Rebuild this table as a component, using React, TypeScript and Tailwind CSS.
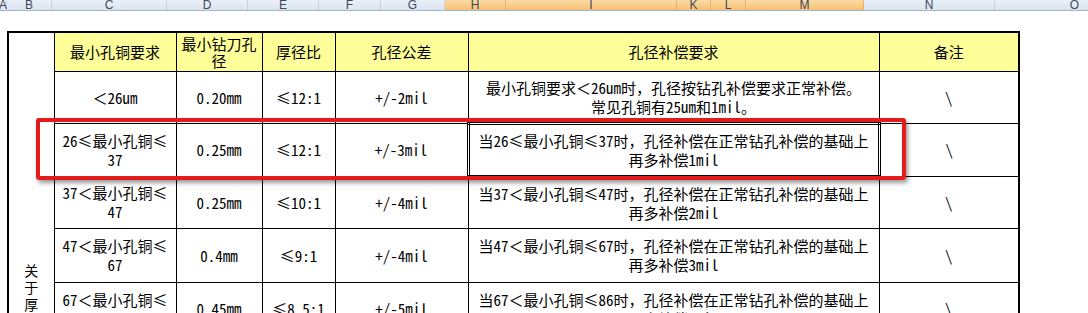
import React from "react";

const colHeads = [
  { l: "A", w: "w-[7px]", sel: false },
  { l: "B", w: "w-[45px]", sel: false },
  { l: "C", w: "w-[115px]", sel: false },
  { l: "D", w: "w-[81px]", sel: false },
  { l: "E", w: "w-[71px]", sel: false },
  { l: "F", w: "w-[62px]", sel: false },
  { l: "G", w: "w-[64px]", sel: false },
  { l: "H", w: "w-[61px]", sel: true },
  { l: "I", w: "w-[171px]", sel: true },
  { l: "K", w: "w-[34px]", sel: true },
  { l: "L", w: "w-[35px]", sel: true },
  { l: "M", w: "w-[118px]", sel: true },
  { l: "N", w: "w-[131px]", sel: false },
  { l: "O", w: "w-[160px]", sel: false },
];

const rows = [
  {
    copper: ["＜26um"],
    drill: "0.20mm",
    ratio: "≤12:1",
    tol: "+/-2mil",
    comp: ["最小孔铜要求＜26um时，孔径按钻孔补偿要求正常补偿。", "常见孔铜有25um和1mil。"],
    h: "h-[52px]",
  },
  {
    copper: ["26≤最小孔铜≤", "37"],
    drill: "0.25mm",
    ratio: "≤12:1",
    tol: "+/-3mil",
    comp: ["当26≤最小孔铜≤37时，孔径补偿在正常钻孔补偿的基础上", "再多补偿1mil"],
    h: "h-[53px]",
    sel: true,
  },
  {
    copper: ["37＜最小孔铜≤", "47"],
    drill: "0.25mm",
    ratio: "≤10:1",
    tol: "+/-4mil",
    comp: ["当37＜最小孔铜≤47时，孔径补偿在正常钻孔补偿的基础上", "再多补偿2mil"],
    h: "h-[52px]",
  },
  {
    copper: ["47＜最小孔铜≤", "67"],
    drill: "0.4mm",
    ratio: "≤9:1",
    tol: "+/-4mil",
    comp: ["当47＜最小孔铜≤67时，孔径补偿在正常钻孔补偿的基础上", "再多补偿3mil"],
    h: "h-[54px]",
  },
  {
    copper: ["67＜最小孔铜≤", "86"],
    drill: "0.45mm",
    ratio: "≤8.5:1",
    tol: "+/-5mil",
    comp: ["当67＜最小孔铜≤86时，孔径补偿在正常钻孔补偿的基础上", "再多补偿4mil"],
    h: "h-[54px]",
  },
];

function Lines({ lines }: { lines: string[] }) {
  return (
    <>
      {lines.map((t, i) => (
        <div key={i} className="whitespace-nowrap">
          {t}
        </div>
      ))}
    </>
  );
}

export default function App() {
  const cell = "border border-black text-center align-middle p-0";

  return (
    <div className="relative w-[1088px] h-[313px] overflow-hidden bg-white">
      {/* Column header strip */}
      <div className="flex h-[11px] overflow-hidden border-b border-[#9eb6ce] font-['Liberation_Sans',sans-serif] text-[12px] text-[#3c4a5c]">
        {colHeads.map((c) => (
          <div
            key={c.l}
            className={`${c.w} shrink-0 flex justify-center items-end border-r leading-none ${
              c.sel
                ? "bg-gradient-to-b from-[#fbdba6] to-[#f6c072] border-[#f0b15d]"
                : "bg-gradient-to-b from-[#eaf0f8] to-[#dbe4ef] border-[#c5d3e3]"
            }`}
          >
            <span className="-mb-[1px]">{c.l}</span>
          </div>
        ))}
      </div>

      {/* Sheet */}
      <div className="pt-[20px] pl-[7px]">
        <table className="table-fixed border-collapse border-2 border-black w-[1011px] text-[15px] leading-[19px] text-black font-['Noto_Sans_Mono_CJK_SC','Noto_Sans_CJK_SC',sans-serif]">
          <colgroup>
            <col className="w-[46px]" />
            <col className="w-[122px]" />
            <col className="w-[86px]" />
            <col className="w-[73px]" />
            <col className="w-[133px]" />
            <col className="w-[411px]" />
            <col className="w-[140px]" />
          </colgroup>
          <tbody>
            <tr className="h-[39px]">
              <td rowSpan={6} className="border border-black align-top p-0">
                {/* merged label cell, text runs down past the visible area */}
                <div className="flex flex-col items-center pt-[229px]">
                  {["关", "于", "厚"].map((ch) => (
                    <span key={ch} className="block h-[17px] leading-[17px] text-[14px]">
                      {ch}
                    </span>
                  ))}
                </div>
              </td>
              <td className={`${cell} bg-[#ffff99]`}>最小孔铜要求</td>
              <td className={`${cell} bg-[#ffff99] leading-[17px]`}>
                <Lines lines={["最小钻刀孔", "径"]} />
              </td>
              <td className={`${cell} bg-[#ffff99]`}>厚径比</td>
              <td className={`${cell} bg-[#ffff99]`}>孔径公差</td>
              <td className={`${cell} bg-[#ffff99]`}>孔径补偿要求</td>
              <td className={`${cell} bg-[#ffff99]`}>备注</td>
            </tr>
            {rows.map((r, i) => (
              <tr key={i} className={r.h}>
                <td className={cell}>
                  <Lines lines={r.copper} />
                </td>
                <td className={cell}>{r.drill}</td>
                <td className={cell}>{r.ratio}</td>
                <td className={cell}>{r.tol}</td>
                <td
                  className={
                    r.sel
                      ? "border-[3px] border-double border-black text-center align-middle p-0"
                      : cell
                  }
                >
                  <Lines lines={r.comp} />
                </td>
                <td className={cell}>\</td>
              </tr>
            ))}
          </tbody>
        </table>
      </div>

      {/* Red highlight box */}
      <div className="absolute left-[36px] top-[118px] w-[870px] h-[62px] border-4 border-[#e21b1b] rounded-[3px] shadow-[2px_3px_4px_rgba(0,0,0,0.4)]" />
    </div>
  );
}
